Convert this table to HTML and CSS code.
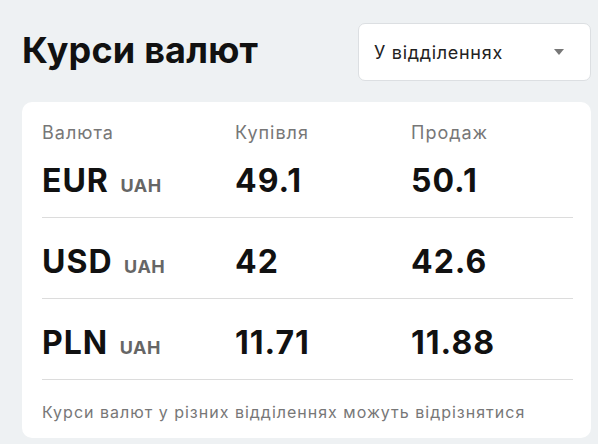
FILE: index.html
```html
<!DOCTYPE html>
<html lang="uk">
<head>
<meta charset="utf-8">
<link rel="stylesheet" href="styles.css">
</head>
<body>
<div class="page">
  <div class="top">
    <h1 class="title">Курси валют</h1>
    <div class="select">
      <span class="select-text">У відділеннях</span>
      <svg class="caret" width="10" height="6" viewBox="0 0 10 6"><path d="M0 0H10L5 6Z" fill="#777"/></svg>
    </div>
  </div>
  <div class="card">
    <div class="row head">
      <div class="cell">Валюта</div>
      <div class="cell">Купівля</div>
      <div class="cell">Продаж</div>
    </div>
    <div class="row rate">
      <div class="cell cur">EUR <span class="sub">UAH</span></div>
      <div class="cell num">49.1</div>
      <div class="cell num">50.1</div>
    </div>
    <div class="row rate">
      <div class="cell cur">USD <span class="sub">UAH</span></div>
      <div class="cell num">42</div>
      <div class="cell num">42.6</div>
    </div>
    <div class="row rate">
      <div class="cell cur">PLN <span class="sub">UAH</span></div>
      <div class="cell num">11.71</div>
      <div class="cell num">11.88</div>
    </div>
    <p class="note">Курси валют у різних відділеннях можуть відрізнятися</p>
  </div>
</div>
</body>
</html>
```

FILE: styles.css
```css
html, body {
  margin: 0;
  padding: 0;
  background: #eef1f3;
}
body {
  font-family: Inter, "Noto Sans", sans-serif;
  color: #111;
}
.page {
  padding: 23px 7px 0 22px;
}
.top {
  display: flex;
  justify-content: space-between;
  align-items: flex-start;
}
.title {
  margin: 0;
  padding-top: 7px;
  font-size: 36px;
  line-height: 40px;
  font-weight: 700;
  letter-spacing: 0.2px;
  color: #111;
}
.select {
  box-sizing: border-box;
  width: 233px;
  height: 58px;
  background: #fff;
  border: 1px solid #dcdfe2;
  border-radius: 7px;
  display: flex;
  align-items: center;
  justify-content: space-between;
  padding: 0 26px 0 15px;
}
.select-text {
  font-size: 18px;
  letter-spacing: 0.7px;
  color: #222;
}
.caret {
  display: block;
}
.card {
  margin-top: 21px;
  background: #fff;
  border-radius: 10px;
  padding: 19px 18px 0 20px;
  height: 336px;
  box-sizing: border-box;
}
.row {
  display: grid;
  grid-template-columns: 193px 176px 1fr;
}
.cell {
  white-space: nowrap;
}
.head {
  font-size: 18px;
  line-height: 24px;
  letter-spacing: 1px;
  color: #777;
}
.rate {
  border-bottom: 1px solid #dcdcdc;
  height: 81px;
  box-sizing: border-box;
  align-items: end;
  padding-bottom: 18px;
}
.head + .rate {
  height: 73px;
}
.cur, .num {
  font-size: 32px;
  line-height: 36px;
  font-weight: 700;
  letter-spacing: 1px;
  color: #111;
}
.sub {
  font-size: 18px;
  line-height: 1;
  font-weight: 700;
  letter-spacing: 0.5px;
  color: #666;
  margin-left: 3px;
}
.note {
  margin: 22px 0 0 0;
  font-size: 16px;
  line-height: 20px;
  letter-spacing: 1px;
  color: #777;
}
```
